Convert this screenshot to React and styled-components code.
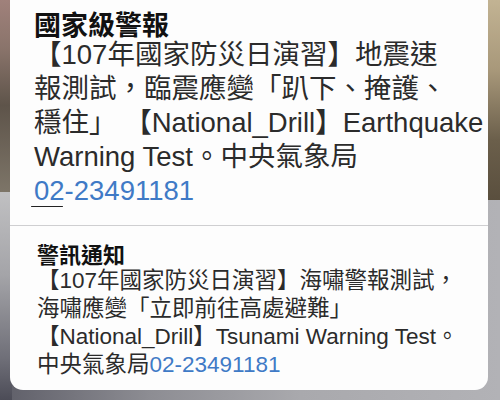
import styled, { createGlobalStyle } from "styled-components";

const GlobalStyle = createGlobalStyle`
  html, body {
    margin: 0;
    padding: 0;
  }
  body {
    width: 500px;
    height: 400px;
    overflow: hidden;
  }
`;

const Screen = styled.div`
  width: 500px;
  height: 400px;
  box-sizing: border-box;
  padding: 0 12px 10px 10px;
  background:
    linear-gradient(180deg, #a0817b 0%, #8a746b 25%, #5e544a 55%, #7d7568 100%)
      left top / 12px 192px no-repeat,
    linear-gradient(180deg, #c2b393 0%, #a8987a 35%, #6b5f4b 70%, #5a4f3e 100%)
      right top / 14px 200px no-repeat,
    linear-gradient(180deg, #c0c0c2 0%, #a4a4a8 40%, #6f6f78 80%, #4c4c57 100%)
      left 192px / 12px 208px no-repeat,
    linear-gradient(90deg, #5e5e68 0%, #8d8d93 30%, #a9a9ad 60%, #b2b2b6 100%);
  font-family: "Liberation Sans", "Noto Sans CJK TC", sans-serif;
`;

const Card = styled.div`
  background: #fdfdfd;
  border-radius: 0 0 13px 13px;
  height: 390px;
  display: flex;
  flex-direction: column;
`;

const Section = styled.div`
  padding: ${(p) => p.$pad};
  border-bottom: ${(p) => (p.$divider ? "1px solid #cfcfd1" : "none")};
`;

const Title = styled.div`
  font-family: "Noto Sans CJK TC", sans-serif;
  font-weight: 700;
  font-size: ${(p) => p.$size}px;
  line-height: ${(p) => p.$lh}px;
  color: #111;
`;

const Body = styled.div`
  font-size: ${(p) => p.$size}px;
  line-height: ${(p) => p.$lh}px;
  color: #2b2b2b;
  white-space: nowrap;
`;

const Link = styled.span`
  color: #3f7ac6;
`;

const Cursor = styled.span`
  position: relative;
  &::after {
    content: "";
    position: absolute;
    left: -3px;
    right: 2px;
    bottom: -1px;
    height: 1.5px;
    border-radius: 1px;
    background: #222;
  }
`;

export default function App() {
  return (
    <>
      <GlobalStyle />
      <Screen>
        <Card>
          <Section $pad="10px 0 17px 24px" $divider>
            <Title $size={27} $lh={28}>國家級警報</Title>
            <Body $size={27.5} $lh={34}>
              【107年國家防災日演習】地震速
              <br />
              報測試，臨震應變「趴下、掩護、
              <br />
              穩住」 【National_Drill】Earthquake
              <br />
              Warning Test。中央氣象局
              <br />
              <Link>
                <Cursor>02</Cursor>-23491181
              </Link>
            </Body>
          </Section>
          <Section $pad="13px 0 0 27px">
            <Title $size={22} $lh={28}>警訊通知</Title>
            <Body $size={22.5} $lh={28}>
              【107年國家防災日演習】海嘯警報測試，
              <br />
              海嘯應變「立即前往高處避難」
              <br />
              【National_Drill】Tsunami Warning Test。
              <br />
              中央氣象局<Link>02-23491181</Link>
            </Body>
          </Section>
        </Card>
      </Screen>
    </>
  );
}
